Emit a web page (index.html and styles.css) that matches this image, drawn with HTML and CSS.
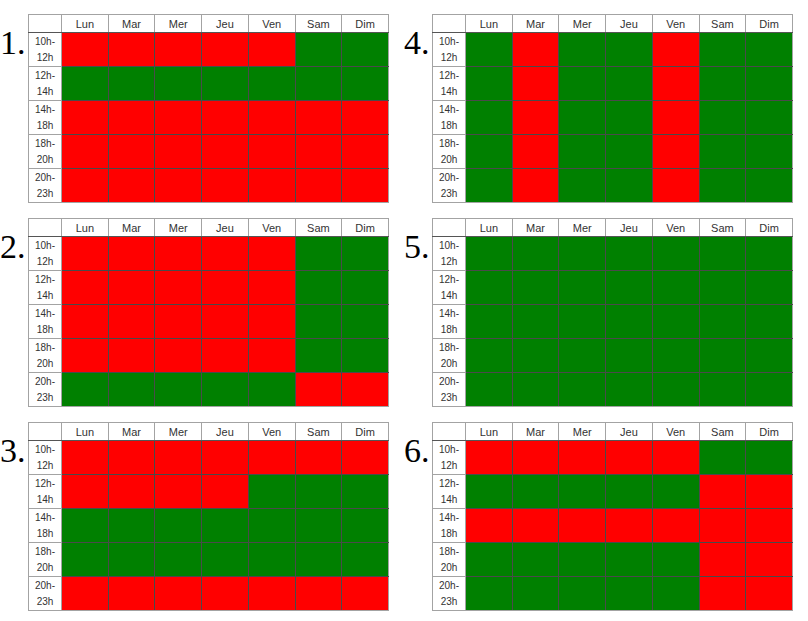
FILE: index.html
```html
<!DOCTYPE html>
<html lang="fr">
<head>
<meta charset="utf-8">
<title>Planning</title>
<link rel="stylesheet" href="styles.css">
</head>
<body>
<div class="page">

<div class="block">
<div class="num">1.</div>
<table class="sched">
<colgroup><col class="c0"><col><col><col><col><col><col><col></colgroup>
<tr class="head"><th></th><th>Lun</th><th>Mar</th><th>Mer</th><th>Jeu</th><th>Ven</th><th>Sam</th><th>Dim</th></tr>
<tr><th class="slot">10h-<br>12h</th><td class="r"></td><td class="r"></td><td class="r"></td><td class="r"></td><td class="r"></td><td class="g"></td><td class="g"></td></tr>
<tr><th class="slot">12h-<br>14h</th><td class="g"></td><td class="g"></td><td class="g"></td><td class="g"></td><td class="g"></td><td class="g"></td><td class="g"></td></tr>
<tr><th class="slot">14h-<br>18h</th><td class="r"></td><td class="r"></td><td class="r"></td><td class="r"></td><td class="r"></td><td class="r"></td><td class="r"></td></tr>
<tr><th class="slot">18h-<br>20h</th><td class="r"></td><td class="r"></td><td class="r"></td><td class="r"></td><td class="r"></td><td class="r"></td><td class="r"></td></tr>
<tr><th class="slot">20h-<br>23h</th><td class="r"></td><td class="r"></td><td class="r"></td><td class="r"></td><td class="r"></td><td class="r"></td><td class="r"></td></tr>
</table>
</div>

<div class="block">
<div class="num">4.</div>
<table class="sched">
<colgroup><col class="c0"><col><col><col><col><col><col><col></colgroup>
<tr class="head"><th></th><th>Lun</th><th>Mar</th><th>Mer</th><th>Jeu</th><th>Ven</th><th>Sam</th><th>Dim</th></tr>
<tr><th class="slot">10h-<br>12h</th><td class="g"></td><td class="r"></td><td class="g"></td><td class="g"></td><td class="r"></td><td class="g"></td><td class="g"></td></tr>
<tr><th class="slot">12h-<br>14h</th><td class="g"></td><td class="r"></td><td class="g"></td><td class="g"></td><td class="r"></td><td class="g"></td><td class="g"></td></tr>
<tr><th class="slot">14h-<br>18h</th><td class="g"></td><td class="r"></td><td class="g"></td><td class="g"></td><td class="r"></td><td class="g"></td><td class="g"></td></tr>
<tr><th class="slot">18h-<br>20h</th><td class="g"></td><td class="r"></td><td class="g"></td><td class="g"></td><td class="r"></td><td class="g"></td><td class="g"></td></tr>
<tr><th class="slot">20h-<br>23h</th><td class="g"></td><td class="r"></td><td class="g"></td><td class="g"></td><td class="r"></td><td class="g"></td><td class="g"></td></tr>
</table>
</div>

<div class="block">
<div class="num">2.</div>
<table class="sched">
<colgroup><col class="c0"><col><col><col><col><col><col><col></colgroup>
<tr class="head"><th></th><th>Lun</th><th>Mar</th><th>Mer</th><th>Jeu</th><th>Ven</th><th>Sam</th><th>Dim</th></tr>
<tr><th class="slot">10h-<br>12h</th><td class="r"></td><td class="r"></td><td class="r"></td><td class="r"></td><td class="r"></td><td class="g"></td><td class="g"></td></tr>
<tr><th class="slot">12h-<br>14h</th><td class="r"></td><td class="r"></td><td class="r"></td><td class="r"></td><td class="r"></td><td class="g"></td><td class="g"></td></tr>
<tr><th class="slot">14h-<br>18h</th><td class="r"></td><td class="r"></td><td class="r"></td><td class="r"></td><td class="r"></td><td class="g"></td><td class="g"></td></tr>
<tr><th class="slot">18h-<br>20h</th><td class="r"></td><td class="r"></td><td class="r"></td><td class="r"></td><td class="r"></td><td class="g"></td><td class="g"></td></tr>
<tr><th class="slot">20h-<br>23h</th><td class="g"></td><td class="g"></td><td class="g"></td><td class="g"></td><td class="g"></td><td class="r"></td><td class="r"></td></tr>
</table>
</div>

<div class="block">
<div class="num">5.</div>
<table class="sched">
<colgroup><col class="c0"><col><col><col><col><col><col><col></colgroup>
<tr class="head"><th></th><th>Lun</th><th>Mar</th><th>Mer</th><th>Jeu</th><th>Ven</th><th>Sam</th><th>Dim</th></tr>
<tr><th class="slot">10h-<br>12h</th><td class="g"></td><td class="g"></td><td class="g"></td><td class="g"></td><td class="g"></td><td class="g"></td><td class="g"></td></tr>
<tr><th class="slot">12h-<br>14h</th><td class="g"></td><td class="g"></td><td class="g"></td><td class="g"></td><td class="g"></td><td class="g"></td><td class="g"></td></tr>
<tr><th class="slot">14h-<br>18h</th><td class="g"></td><td class="g"></td><td class="g"></td><td class="g"></td><td class="g"></td><td class="g"></td><td class="g"></td></tr>
<tr><th class="slot">18h-<br>20h</th><td class="g"></td><td class="g"></td><td class="g"></td><td class="g"></td><td class="g"></td><td class="g"></td><td class="g"></td></tr>
<tr><th class="slot">20h-<br>23h</th><td class="g"></td><td class="g"></td><td class="g"></td><td class="g"></td><td class="g"></td><td class="g"></td><td class="g"></td></tr>
</table>
</div>

<div class="block">
<div class="num">3.</div>
<table class="sched">
<colgroup><col class="c0"><col><col><col><col><col><col><col></colgroup>
<tr class="head"><th></th><th>Lun</th><th>Mar</th><th>Mer</th><th>Jeu</th><th>Ven</th><th>Sam</th><th>Dim</th></tr>
<tr><th class="slot">10h-<br>12h</th><td class="r"></td><td class="r"></td><td class="r"></td><td class="r"></td><td class="r"></td><td class="r"></td><td class="r"></td></tr>
<tr><th class="slot">12h-<br>14h</th><td class="r"></td><td class="r"></td><td class="r"></td><td class="r"></td><td class="g"></td><td class="g"></td><td class="g"></td></tr>
<tr><th class="slot">14h-<br>18h</th><td class="g"></td><td class="g"></td><td class="g"></td><td class="g"></td><td class="g"></td><td class="g"></td><td class="g"></td></tr>
<tr><th class="slot">18h-<br>20h</th><td class="g"></td><td class="g"></td><td class="g"></td><td class="g"></td><td class="g"></td><td class="g"></td><td class="g"></td></tr>
<tr><th class="slot">20h-<br>23h</th><td class="r"></td><td class="r"></td><td class="r"></td><td class="r"></td><td class="r"></td><td class="r"></td><td class="r"></td></tr>
</table>
</div>

<div class="block">
<div class="num">6.</div>
<table class="sched">
<colgroup><col class="c0"><col><col><col><col><col><col><col></colgroup>
<tr class="head"><th></th><th>Lun</th><th>Mar</th><th>Mer</th><th>Jeu</th><th>Ven</th><th>Sam</th><th>Dim</th></tr>
<tr><th class="slot">10h-<br>12h</th><td class="r"></td><td class="r"></td><td class="r"></td><td class="r"></td><td class="r"></td><td class="g"></td><td class="g"></td></tr>
<tr><th class="slot">12h-<br>14h</th><td class="g"></td><td class="g"></td><td class="g"></td><td class="g"></td><td class="g"></td><td class="r"></td><td class="r"></td></tr>
<tr><th class="slot">14h-<br>18h</th><td class="r"></td><td class="r"></td><td class="r"></td><td class="r"></td><td class="r"></td><td class="r"></td><td class="r"></td></tr>
<tr><th class="slot">18h-<br>20h</th><td class="g"></td><td class="g"></td><td class="g"></td><td class="g"></td><td class="g"></td><td class="r"></td><td class="r"></td></tr>
<tr><th class="slot">20h-<br>23h</th><td class="g"></td><td class="g"></td><td class="g"></td><td class="g"></td><td class="g"></td><td class="r"></td><td class="r"></td></tr>
</table>
</div>

</div>
</body>
</html>
```

FILE: styles.css
```css
html, body {
  margin: 0;
  padding: 0;
  background: #ffffff;
}

.page {
  display: grid;
  grid-template-columns: 389px 389px;
  column-gap: 15px;
  row-gap: 15px;
  padding-top: 14px;
}

.block {
  display: flex;
  align-items: flex-start;
}

.num {
  width: 28px;
  flex: none;
  padding-top: 12px;
  font-family: "Liberation Serif", "Times New Roman", serif;
  font-size: 34px;
  line-height: 34px;
  color: #000;
}

.sched {
  width: 361px;
  table-layout: fixed;
  border-collapse: collapse;
  font-family: "Liberation Sans", Arial, sans-serif;
  color: #333;
}

.sched .c0 {
  width: 33px;
}

.sched th,
.sched td {
  border: 1px solid #a3a3a3;
  padding: 0;
  text-align: center;
  font-weight: normal;
}

.sched .head th {
  height: 17px;
  font-size: 11px;
  line-height: 12px;
  border-bottom-color: #555;
}

.sched .slot {
  height: 33px;
  font-size: 10px;
  line-height: 16px;
}

.sched td {
  border-color: #4a4a4a;
}

.sched td:last-child {
  border-right-color: #a3a3a3;
}

.sched tr:last-child td {
  border-bottom-color: #a3a3a3;
}

.sched .r {
  background: #ff0000;
}

.sched .g {
  background: #008000;
}
```
